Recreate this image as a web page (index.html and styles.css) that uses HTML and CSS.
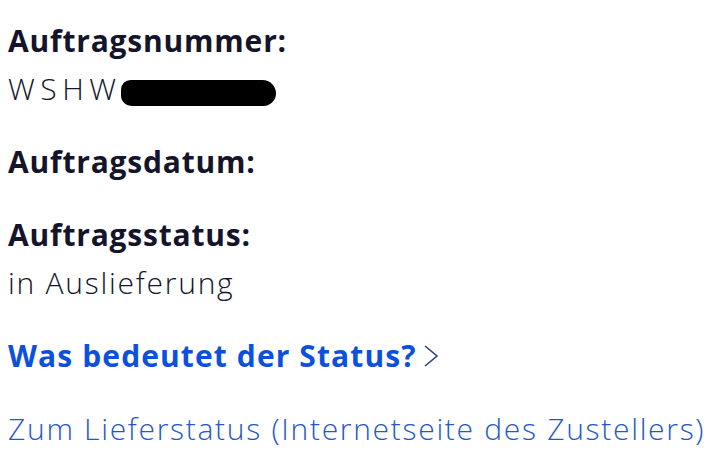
FILE: index.html
```html
<!DOCTYPE html>
<html lang="de">
<head>
<meta charset="utf-8">
<link rel="stylesheet" href="styles.css">
</head>
<body>
<main class="page">
  <section class="field">
    <div class="label">Auftragsnummer:</div>
    <div class="value"><span class="code">WSHW</span><span class="redact"></span></div>
  </section>
  <section class="field">
    <div class="label">Auftragsdatum:</div>
  </section>
  <section class="field">
    <div class="label">Auftragsstatus:</div>
    <div class="value">in Auslieferung</div>
  </section>
  <a class="link-bold" href="#">Was bedeutet der Status?<svg class="chev" width="16" height="24" viewBox="0 0 16 24"><polyline points="2,2 14,12 2,22" fill="none" stroke="currentColor" stroke-width="1.6"/></svg></a>
  <a class="link" href="#">Zum Lieferstatus (Internetseite des Zustellers)</a>
</main>
</body>
</html>
```
FILE: styles.css
```css
html, body {
  margin: 0;
  padding: 0;
  background: #ffffff;
}
body {
  font-family: "Open Sans", "Noto Sans", sans-serif;
  color: #14142b;
}
.page {
  display: flex;
  flex-direction: column;
  gap: 25px;
  padding: 17px 0 0 8px;
}
.field {
  display: flex;
  flex-direction: column;
}
.label {
  font-size: 30px;
  line-height: 48px;
  font-weight: 700;
  letter-spacing: 0.8px;
  white-space: nowrap;
}
.value {
  font-size: 30px;
  line-height: 48px;
  font-weight: 300;
  letter-spacing: 1.75px;
  white-space: nowrap;
}
.code {
  letter-spacing: 5.5px;
}
.redact {
  display: inline-block;
  width: 155px;
  height: 26px;
  background: #000;
  border-radius: 10px 14px 13px 11px;
  vertical-align: -6px;
}
.link-bold {
  font-size: 30px;
  line-height: 48px;
  font-weight: 700;
  letter-spacing: 1.1px;
  color: #0c50dd;
  text-decoration: none;
  white-space: nowrap;
  display: flex;
  align-items: center;
}
.chev {
  color: #28408f;
  margin-left: 6px;
}
.link {
  font-size: 30px;
  line-height: 48px;
  font-weight: 300;
  letter-spacing: 1.7px;
  color: #2457c9;
  text-decoration: none;
  white-space: nowrap;
}
```
